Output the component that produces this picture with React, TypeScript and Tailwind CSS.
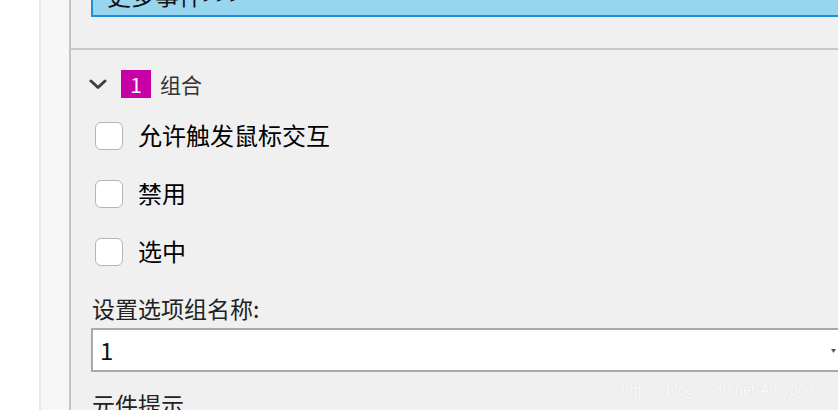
import React from "react";

const CJK = { fontFamily: '"Noto Sans CJK SC", "Noto Sans", sans-serif' };

function Checkbox({ label }: { label: string }) {
  return (
    <div className="flex items-center h-[28px]">
      <div className="w-[28px] h-[28px] rounded-[6px] border border-[#b5b5b5] bg-white shrink-0" />
      <span className="ml-[15px] -mt-[3px] text-[24px] leading-[28px] text-[#000]">{label}</span>
    </div>
  );
}

export default function App() {
  return (
    <div
      className="relative flex w-[838px] h-[410px] overflow-hidden bg-white"
      style={CJK}
    >
      <div className="w-[39px] shrink-0 bg-white" />
      <div className="w-[32px] shrink-0 bg-[#f7f7f7] border-l-2 border-l-[#e8e8e8] border-r-2 border-r-[#c4c4c4]" />
      <div className="flex-1 min-w-0 bg-[#f0f0f0] flex flex-col">
        <div className="h-[48px] shrink-0">
          <div className="ml-[20px] -mt-[27px] h-[44px] w-[780px] border-2 border-[#1e90d8] bg-[#98d5ef] flex items-center pl-[14px]">
            <span className="text-[24px] leading-[28px] text-[#111] whitespace-nowrap">更多事件&gt;&gt;&gt;</span>
          </div>
        </div>
        <div className="h-[2px] shrink-0 bg-[#c8c8c8]" />
        <div className="flex items-center h-[28px] mt-[20px] pl-[18px]">
          <svg width="18" height="11" viewBox="0 0 18 11" className="shrink-0">
            <path d="M2 2 L9 8.5 L16 2" fill="none" stroke="#3d4147" strokeWidth="3" strokeLinecap="round" strokeLinejoin="round" />
          </svg>
          <div className="ml-[14px] w-[30px] h-[28px] bg-[#c800a8] text-white flex items-center justify-center text-[21px] leading-none">
            1
          </div>
          <span className="ml-[9px] text-[21px] leading-[28px] text-[#333]">组合</span>
        </div>
        <div className="flex flex-col gap-[30px] mt-[24px] pl-[24px]">
          <Checkbox label="允许触发鼠标交互" />
          <Checkbox label="禁用" />
          <Checkbox label="选中" />
        </div>
        <div className="mt-[27px] pl-[21px] text-[23px] leading-[30px] text-[#222] whitespace-nowrap">
          设置选项组名称:
        </div>
        <div className="ml-[20px] mt-[5px] w-[790px] h-[44px] shrink-0 border-2 border-[#a9a9a9] bg-white flex items-center justify-between pl-[7px]">
          <span className="text-[24px] leading-none text-[#111]">1</span>
          <svg width="5" height="4" viewBox="0 0 5 4" className="mr-[43px] mt-[1px]">
            <path d="M0 0 H5 L2.5 4 Z" fill="#555" />
          </svg>
        </div>
        <div className="mt-[17px] pl-[21px] text-[23px] leading-[30px] text-[#222] whitespace-nowrap">
          元件提示
        </div>
      </div>
      <div
        className="absolute left-[621px] top-[381px] text-[15px] leading-[18px] text-[#fbfbfb] [text-shadow:0_0_1px_#d2d2d2] whitespace-nowrap"
        style={{ fontFamily: '"Liberation Sans", Arial, sans-serif' }}
      >
        https://blog.csdn.net/Amydom
      </div>
    </div>
  );
}
